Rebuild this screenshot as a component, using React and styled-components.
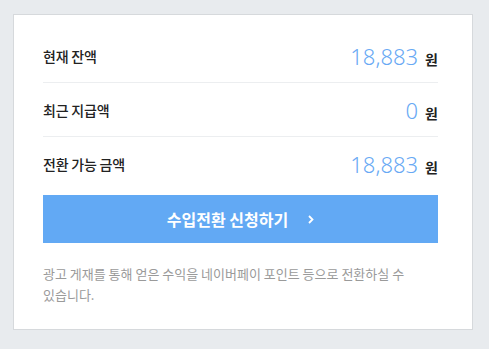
import React from "react";
import styled, { createGlobalStyle } from "styled-components";

const Global = createGlobalStyle`
  html, body { margin: 0; padding: 0; background: #e8ebee; }
  body { font-family: "Noto Sans CJK KR", "Noto Sans", sans-serif; }
  #root { padding: 14px 0 0 13px; }
`;

const Card = styled.div`
  box-sizing: border-box;
  width: 460px;
  height: 316px;
  background: #fff;
  border: 1px solid #d6d9dc;
  padding: 14px 34px 24px 29px;
`;

const Row = styled.div`
  display: flex;
  align-items: center;
  justify-content: space-between;
  height: 53px;
  border-bottom: ${(p) => (p.$last ? "none" : "1px solid #eceef0")};
`;

const Label = styled.span`
  font-size: 14px;
  font-weight: 500;
  color: #222;
  letter-spacing: -0.2px;
`;

const Amount = styled.span`
  display: flex;
  align-items: baseline;
  gap: 7px;
`;

const Num = styled.span`
  font-family: "Noto Sans", sans-serif;
  font-size: 22px;
  font-weight: 300;
  color: #68a9f4;
`;

const Unit = styled.span`
  font-size: 14px;
  font-weight: 700;
  color: #222;
`;

const Button = styled.button`
  margin-top: 5px;
  width: 100%;
  height: 48px;
  border: none;
  background: #62a9f4;
  color: #fff;
  display: flex;
  align-items: center;
  justify-content: center;
  gap: 20px;
  font-family: "Noto Sans CJK KR", sans-serif;
  font-size: 16px;
  font-weight: 700;
  padding: 0;
  cursor: pointer;
`;

const Note = styled.p`
  margin: 20px 0 0;
  font-size: 13px;
  line-height: 21px;
  color: #9a9a9a;
  padding-right: 28px;
`;

export default function App() {
  return (
    <>
      <Global />
      <Card>
        <Row>
          <Label>현재 잔액</Label>
          <Amount>
            <Num>18,883</Num>
            <Unit>원</Unit>
          </Amount>
        </Row>
        <Row>
          <Label>최근 지급액</Label>
          <Amount>
            <Num>0</Num>
            <Unit>원</Unit>
          </Amount>
        </Row>
        <Row $last>
          <Label>전환 가능 금액</Label>
          <Amount>
            <Num>18,883</Num>
            <Unit>원</Unit>
          </Amount>
        </Row>
        <Button>
          <span>수입전환 신청하기</span>
          <svg width="6" height="9" viewBox="0 0 6 9">
            <path d="M1 1l3.5 3.5L1 8" fill="none" stroke="#fff" strokeWidth="1.8" />
          </svg>
        </Button>
        <Note>
          광고 게재를 통해 얻은 수익을 네이버페이 포인트 등으로 전환하실 수 있습니다.
        </Note>
      </Card>
    </>
  );
}
